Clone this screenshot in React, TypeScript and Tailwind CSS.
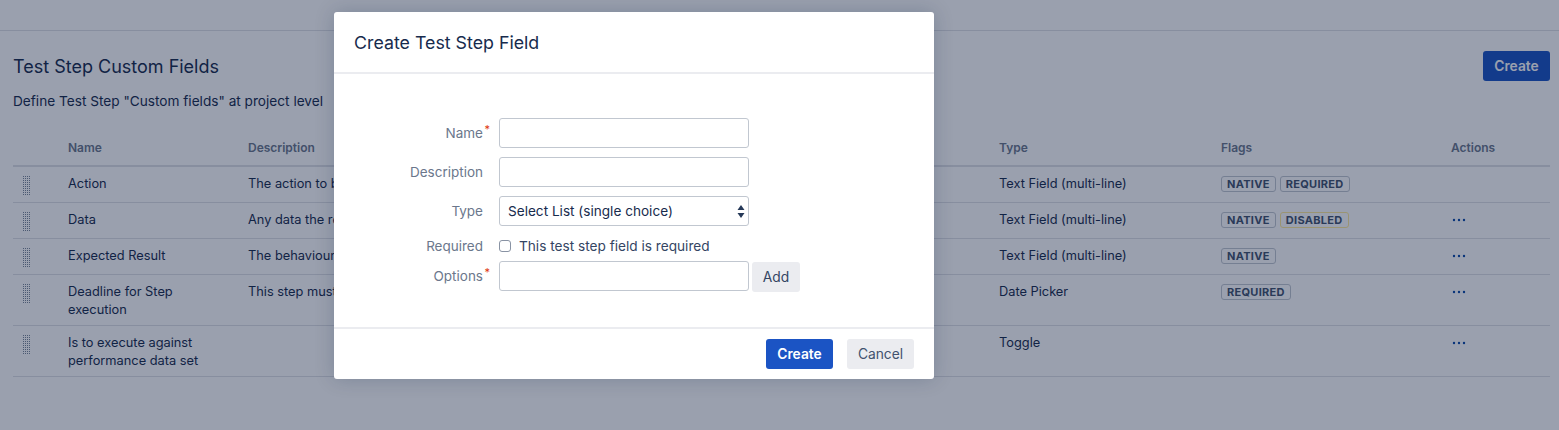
import React from 'react';

type Row = {
  name: string;
  description: string;
  type: string;
  flags: { label: string; warn?: boolean }[];
  actions: boolean;
};

const rows: Row[] = [
  { name: 'Action', description: 'The action to be performed during the test step', type: 'Text Field (multi-line)', flags: [{ label: 'Native' }, { label: 'Required' }], actions: false },
  { name: 'Data', description: 'Any data the required to perform the test step', type: 'Text Field (multi-line)', flags: [{ label: 'Native' }, { label: 'Disabled', warn: true }], actions: true },
  { name: 'Expected Result', description: 'The behaviour expected after the test step', type: 'Text Field (multi-line)', flags: [{ label: 'Native' }], actions: true },
  { name: 'Deadline for Step execution', description: 'This step must be executed before this date', type: 'Date Picker', flags: [{ label: 'Required' }], actions: true },
  { name: 'Is to execute against performance data set', description: '', type: 'Toggle', flags: [], actions: true },
];

function DragHandle() {
  const dots = [];
  for (let y = 0; y < 10; y++) {
    for (let x = 0; x < 4; x++) {
      dots.push(<rect key={`${x}-${y}`} x={x * 2} y={y * 2} width="1" height="1" fill="#7a869a" />);
    }
  }
  return (
    <svg width="8" height="20" viewBox="0 0 8 20" className="ml-[10px] mt-px">
      {dots}
    </svg>
  );
}

function Tag({ label, warn }: { label: string; warn?: boolean }) {
  return (
    <span className={`inline-flex h-4 items-center rounded-[3px] border px-[5px] text-[11px] font-bold uppercase leading-none tracking-[0.3px] text-[#42526e] ${warn ? 'border-[#ffeb99]' : 'border-[#c1c7d0]'}`}>
      {label}
    </span>
  );
}

function Dots() {
  return (
    <svg width="14" height="4" viewBox="0 0 14 4" className="ml-px">
      <circle cx="2" cy="2" r="1.2" fill="#0747a6" />
      <circle cx="7" cy="2" r="1.2" fill="#0747a6" />
      <circle cx="12" cy="2" r="1.2" fill="#0747a6" />
    </svg>
  );
}

function Label({ text, required }: { text: string; required?: boolean }) {
  return (
    <label className="relative w-[149px] shrink-0 text-right text-[13.5px] leading-5 text-[#6b778c]">
      {text}
      {required && <span className="absolute right-[-7px] top-[-2px] text-[11px] leading-4 text-[#de350b]">*</span>}
    </label>
  );
}

const inputClass = 'h-[30px] w-[250px] rounded-[3px] border border-[#c1c7d0] bg-white px-2 text-[13.6px] text-[#172b4d] outline-none';

function Modal() {
  return (
    <div className="absolute left-[334px] top-3 w-[600px] rounded-[3px] bg-white shadow-[0_0_20px_rgba(9,30,66,0.2)]">
      <div className="flex h-[62px] items-center border-b-2 border-[#ebecf0] px-5 pt-px">
        <h2 className="text-[17.8px] font-normal text-[#172b4d]">Create Test Step Field</h2>
      </div>
      <div className="flex flex-col pb-[35px] pt-[44px]">
        <div className="mb-[9px] flex items-center gap-4">
          <Label text="Name" required />
          <input className={inputClass} />
        </div>
        <div className="mb-[9px] flex items-center gap-4">
          <Label text="Description" />
          <input className={inputClass} />
        </div>
        <div className="mb-[9px] flex items-center gap-4">
          <Label text="Type" />
          <div className="relative">
            <select className={`${inputClass} appearance-none pb-[1px] pt-[2px]`} defaultValue="Select List (single choice)">
              <option>Select List (single choice)</option>
            </select>
            <svg width="8" height="13" viewBox="0 0 8 13" className="absolute right-[4px] top-[9px]">
              <path d="M4 0 L7.5 5 L0.5 5 Z M0.5 8 L7.5 8 L4 13 Z" fill="#253858" />
            </svg>
          </div>
        </div>
        <div className="mb-[4px] flex h-[22px] items-center gap-4">
          <Label text="Required" />
          <div className="flex items-center gap-2">
            <input type="checkbox" className="h-3 w-3 appearance-none rounded-[3px] border border-[#8993a4] bg-white" />
            <span className="pt-px text-[13.65px] text-[#344563]">This test step field is required</span>
          </div>
        </div>
        <div className="flex items-start">
          <div className="flex h-[30px] items-center">
            <Label text="Options" required />
          </div>
          <input className={`${inputClass} ml-4`} />
          <button className="ml-[3px] mt-px h-[30px] w-12 rounded-[3px] bg-[#ebecf0] pt-px text-[13.8px] text-[#344563]">Add</button>
        </div>
      </div>
      <div className="flex items-center justify-end gap-[14px] border-t-2 border-[#ebecf0] px-5 pb-[10px] pt-[10px]">
        <button className="h-[30px] w-[67px] rounded-[3px] bg-[#1b54c4] pt-px text-[13.8px] font-semibold text-white">Create</button>
        <button className="h-[30px] w-[67px] rounded-[3px] bg-[#ebecf0] pt-px text-[13.8px] text-[#42526e]">Cancel</button>
      </div>
    </div>
  );
}

export default function App() {
  return (
    <div className="relative h-[430px] w-[1559px] overflow-hidden bg-white font-['Inter',sans-serif] text-sm text-[#172b4d]">
      <div className="h-[31px] border-b border-[#dfe1e6]" />
      <div className="pl-[13px] pr-[9px]">
        <div className="flex items-start justify-between pt-5">
          <h1 className="pt-[5px] text-lg font-normal leading-[22px]">Test Step Custom Fields</h1>
          <button className="h-[30px] w-[67px] rounded-[3px] bg-[#1b54c4] pt-px text-[13.8px] font-semibold text-white">Create</button>
        </div>
        <p className="mt-[10px] text-[13.65px] leading-5">Define Test Step "Custom fields" at project level</p>
        <table className="mt-[17px] w-[1537px] table-fixed border-collapse">
          <colgroup>
            <col className="w-[55px]" />
            <col className="w-[180px]" />
            <col className="w-[751px]" />
            <col className="w-[222px]" />
            <col className="w-[230px]" />
            <col className="w-[99px]" />
          </colgroup>
          <thead>
            <tr className="border-b-2 border-[#dfe1e6] text-left text-xs text-[#6b778c]">
              <th />
              <th className="h-[38px] pt-[3px] font-semibold">Name</th>
              <th className="pt-[3px] font-semibold">Description</th>
              <th className="pt-[3px] font-semibold">Type</th>
              <th className="pt-[3px] font-semibold">Flags</th>
              <th className="pt-[3px] font-semibold">Actions</th>
            </tr>
          </thead>
          <tbody>
            {rows.map((row) => (
              <tr key={row.name} className="border-b border-[#dfe1e6] align-top text-[12.8px] leading-[18px]">
                <td className="pb-[6px] pt-2">
                  <DragHandle />
                </td>
                <td className="pb-[6px] pr-8 pt-2">{row.name}</td>
                <td className="pb-[6px] pt-2">{row.description}</td>
                <td className="pb-[6px] pt-2">{row.type}</td>
                <td className="pb-[6px] pt-2">
                  <div className="flex h-[21px] items-start gap-1 pt-px">
                    {row.flags.map((flag) => (
                      <Tag key={flag.label} label={flag.label} warn={flag.warn} />
                    ))}
                  </div>
                </td>
                <td className="pb-[6px] pt-2">
                  {row.actions && (
                    <div className="flex h-[18px] items-center">
                      <Dots />
                    </div>
                  )}
                </td>
              </tr>
            ))}
          </tbody>
        </table>
      </div>
      <div className="absolute inset-0 bg-[rgba(10,24,58,0.41)]" />
      <Modal />
    </div>
  );
}
